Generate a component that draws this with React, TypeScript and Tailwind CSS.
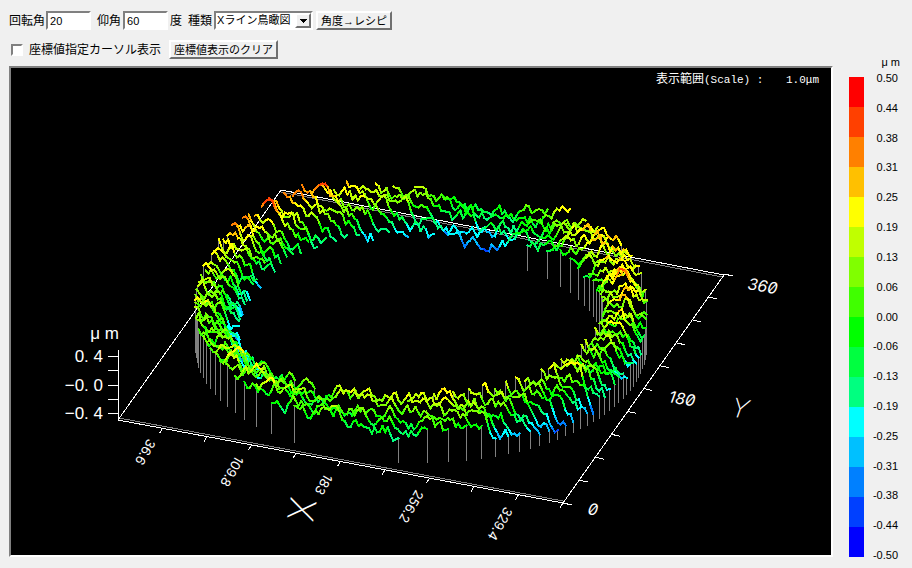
import { useMemo, useState } from 'react'

type Point = [number, number]

const SCALE_COLORS = [
  '#ff0000', '#ff4000', '#ff8000', '#ffc000', '#ffff00', '#c0ff00', '#80ff00', '#40ff00',
  '#00ff00', '#00ff40', '#00ff80', '#00ffff', '#00c0ff', '#0080ff', '#0040ff', '#0000ff',
]

const SCALE_LABELS = [
  '0.50', '0.44', '0.38', '0.31', '0.25', '0.19', '0.13', '0.06', '0.00',
  '-0.06', '-0.13', '-0.19', '-0.25', '-0.31', '-0.38', '-0.44', '-0.50',
]

const X_LABELS = [
  { text: '36.6', x: 148, y: 438 },
  { text: '109.8', x: 236, y: 455 },
  { text: '183', x: 325, y: 473 },
  { text: '256.2', x: 416, y: 489 },
  { text: '329.4', x: 505, y: 506 },
]

const Y_LABELS = [
  { text: '0', x: 587, y: 514 },
  { text: '180', x: 668, y: 402 },
  { text: '360', x: 747, y: 289 },
]

// Height at the inner edge, middle and outer edge of the ring, every 30 degrees
const PROFILE = [
  [0.1, 0.08, -0.14],
  [0.0, 0.3, 0.08],
  [-0.04, 0.1, 0.22],
  [-0.34, -0.2, -0.08],
  [-0.16, 0.04, 0.18],
  [-0.16, 0.12, 0.38],
  [-0.16, 0.08, 0.17],
  [-0.32, 0.04, 0.06],
  [-0.08, 0.12, 0.04],
  [0.08, 0.04, -0.06],
  [0.18, 0.08, -0.12],
  [0.1, 0.0, -0.32],
]

const ROWS = 54
const R_IN = 0.77
const R_OUT = 0.955
const STEP = 0.006
const Z_BASE = 35
const Z_UNIT = 71

// Plane coordinates (0..1) to drawing coordinates
function project(u: number, v: number, lift = 0): Point {
  return [118 + u * 445 + v * 161, 420 + u * 83 - v * 229 - lift]
}

function createRandom(seed: number) {
  let s = seed
  return () => {
    s = (s * 1664525 + 1013904223) % 4294967296
    return s / 4294967296
  }
}

function heightAt(u: number, v: number) {
  const x = 2 * u - 1
  const y = 2 * v - 1
  const r = Math.min(1, Math.max(0, (Math.hypot(x, y) - R_IN) / (R_OUT - R_IN)))
  const a = ((Math.atan2(y, x) / Math.PI) * 6 + 12) % 12
  const i = Math.floor(a) % 12
  const f = a - Math.floor(a)
  const p = PROFILE[i].map((h, k) => h + (PROFILE[(i + 1) % 12][k] - h) * f)
  return r < 0.5 ? p[0] + (p[1] - p[0]) * r * 2 : p[1] + (p[2] - p[1]) * (r * 2 - 1)
}

function colorOf(h: number) {
  const i = Math.floor((0.5 - h) * 16)
  return SCALE_COLORS[Math.min(15, Math.max(0, i))]
}

interface Strand {
  points: Point[]
  heights: number[]
  curtain: string
  drops: [Point, Point][]
}

function makeStrand(from: number, to: number, v: number, random: () => number): Strand {
  const count = Math.max(3, Math.round((to - from) / STEP))
  const points: Point[] = []
  const heights: number[] = []
  let noise = 0
  for (let i = 0; i <= count; i++) {
    const u = from + ((to - from) * i) / count
    noise = noise * 0.74 + (random() - 0.5) * 0.17
    const h = heightAt(u, v) + noise
    heights.push(h)
    points.push(project(u, v, Z_BASE + h * Z_UNIT))
  }
  const start = project(from, v)
  const end = project(to, v)
  const curtain = [start, ...points, end].map((p) => p.join(',')).join(' ')
  const drops: [Point, Point][] = []
  // The far left part of the ring stands free of drop lines
  if (v < 0.6 || from > 0.5) drops.push([points[0], start])
  if (v < 0.2 || from > 0.5) drops.push([points[count], end])
  return { points, heights, curtain, drops }
}

function makeStrands() {
  const random = createRandom(77)
  const strands: Strand[] = []
  for (let row = ROWS; row >= 0; row--) {
    const v = row / ROWS
    const y = Math.abs(2 * v - 1)
    if (y >= R_OUT) continue
    const outer = Math.sqrt(R_OUT * R_OUT - y * y) / 2
    if (y >= R_IN) {
      strands.push(makeStrand(0.5 - outer, 0.5 + outer, v, random))
      continue
    }
    const inner = Math.sqrt(R_IN * R_IN - y * y) / 2
    strands.push(makeStrand(0.5 - outer, 0.5 - inner, v, random))
    strands.push(makeStrand(0.5 + inner, 0.5 + outer, v, random))
  }
  return strands
}

function StrandLine({ strand }: { strand: Strand }) {
  return (
    <>
      {strand.points.slice(1).map((p, i) => (
        <line
          key={i}
          x1={strand.points[i][0]}
          y1={strand.points[i][1]}
          x2={p[0]}
          y2={p[1]}
          stroke={colorOf((strand.heights[i] + strand.heights[i + 1]) / 2)}
        />
      ))}
    </>
  )
}

function Frame() {
  const tenths = [0, 1, 2, 3, 4, 5, 6, 7, 8, 9, 10]
  return (
    <g strokeWidth="1" fill="none">
      <path d="M119 418L563 501M281 192L722 277" stroke="#808080" />
      <path d="M118 420L563 503L724 275L281 190Z" stroke="#fff" />
      {tenths.slice(1).map((n) => {
        const [x, y] = project(n / 10, 0)
        return <path key={n} d={`M${x} ${y}l-3 5`} stroke="#fff" />
      })}
      {tenths.map((n) => {
        const [x, y] = project(1, n / 10)
        return <path key={n} d={`M${x} ${y}l9 2`} stroke="#fff" />
      })}
      <path d="M118.5 350V420M108 356.5h10M108 370.5h10M108 385.5h10M108 399.5h10M108 413.5h10" stroke="#fff" />
    </g>
  )
}

function BirdsEyeView() {
  const strands = useMemo(makeStrands, [])

  return (
    <svg viewBox="11 68 820 487" className="block w-full bg-black" role="img" aria-label="Xライン鳥瞰図">
      <g shapeRendering="crispEdges">
        {strands.map((strand, i) => (
          <g key={i}>
            <polygon points={strand.curtain} fill="#000" />
            {strand.drops.map(([a, b], k) => (
              <line key={k} x1={a[0]} y1={a[1]} x2={b[0]} y2={b[1]} stroke="#808080" />
            ))}
          </g>
        ))}
        <Frame />
        <g strokeWidth="2" strokeLinecap="square">
          {strands.map((strand, i) => (
            <StrandLine key={i} strand={strand} />
          ))}
        </g>
      </g>
      <g fill="#fff">
        <g className="font-['Liberation_Mono','Noto_Sans_CJK_JP',monospace]">
          <text x="656" y="83" className="text-[12px]">
            表示範囲<tspan className="text-[11px]">(Scale) :</tspan>
          </text>
          <text x="819" y="83" textAnchor="end" className="text-[11px]">1.0μm</text>
        </g>
        <g className="font-['Liberation_Sans',sans-serif] text-[17px]" textAnchor="end">
          <text x="119" y="339">μ m</text>
          <text x="103" y="362">0. 4</text>
          <text x="103" y="391">−0. 0</text>
          <text x="103" y="419">−0. 4</text>
        </g>
        <g className="font-['Inter',sans-serif] text-[13px]">
          {X_LABELS.map(({ text, x, y }) => (
            <text key={text} transform={`translate(${x} ${y}) rotate(120)`}>{text}</text>
          ))}
        </g>
        <g className="font-['Inter',sans-serif] text-[16px] italic [font-feature-settings:'zero']">
          {Y_LABELS.map(({ text, x, y }) => (
            <text key={text} transform={`translate(${x} ${y}) rotate(10)`}>{text}</text>
          ))}
        </g>
        <g className="font-['Inter',sans-serif] text-[36px] font-extralight">
          <text transform="translate(291 496) rotate(100)">X</text>
          <text transform="translate(730 416) rotate(10)" className="text-[26px] italic">Y</text>
        </g>
      </g>
    </svg>
  )
}

function ColorScale() {
  return (
    <aside className="flex w-[79px] shrink-0 flex-col pl-4 font-['Liberation_Sans',sans-serif] text-[11px] leading-3">
      <div className="-mt-2.5 pr-3 pb-2 text-right">μ m</div>
      <div className="flex flex-1">
        <div className="mt-px flex w-[15px] flex-col">
          {SCALE_COLORS.map((color) => (
            <div key={color} className="flex-1" style={{ backgroundColor: color }} />
          ))}
        </div>
        <ul className="-mt-1 -mb-1 flex flex-1 flex-col justify-between pr-3.5 text-right">
          {SCALE_LABELS.map((label) => (
            <li key={label}>{label}</li>
          ))}
        </ul>
      </div>
    </aside>
  )
}

const sunken = 'border-2 border-t-[#808080] border-l-[#808080] border-r-white border-b-white bg-white'
const raised = 'border-2 border-t-white border-l-white border-r-[#707070] border-b-[#707070] bg-[#f0f0f0]'

export default function App() {
  const [rotation, setRotation] = useState('20')
  const [elevation, setElevation] = useState('60')
  const [showCursor, setShowCursor] = useState(false)

  return (
    <div className="flex min-h-screen flex-col bg-[#f0f0f0] px-[9px] pt-[11px] font-['Liberation_Sans','Noto_Sans_CJK_JP',sans-serif] text-[12px] leading-4 text-black">
      <div className="flex h-[19px] items-center">
        <label htmlFor="rotation" className="mr-px">回転角</label>
        <input
          id="rotation"
          value={rotation}
          onChange={(e) => setRotation(e.target.value)}
          className={`h-[19px] w-[45px] px-0.5 text-[11px] ${sunken}`}
        />
        <label htmlFor="elevation" className="mr-0.5 ml-1.5">仰角</label>
        <input
          id="elevation"
          value={elevation}
          onChange={(e) => setElevation(e.target.value)}
          className={`h-[19px] w-[45px] px-0.5 text-[11px] ${sunken}`}
        />
        <span className="ml-0.5">度</span>
        <label htmlFor="kind" className="mr-0.5 ml-1.5">種類</label>
        <div className="relative">
          <select id="kind" className={`block h-[19px] w-[99px] appearance-none pl-px text-[11px] leading-[15px] ${sunken}`}>
            <option>Xライン鳥瞰図</option>
          </select>
          <span className={`pointer-events-none absolute top-0.5 right-0.5 flex h-[15px] w-4 items-center justify-center ${raised}`}>
            <svg width="7" height="4" viewBox="0 0 7 4" shapeRendering="crispEdges">
              <path d="M0 0h7L3.5 4z" />
            </svg>
          </span>
        </div>
        <button type="button" className={`ml-[3px] h-[19px] w-[76px] text-[11px] leading-[14px] whitespace-nowrap ${raised}`}>
          角度→レシピ
        </button>
      </div>
      <div className="mt-2.5 flex h-[19px] items-center pl-0.5">
        <input
          id="cursor"
          type="checkbox"
          checked={showCursor}
          onChange={(e) => setShowCursor(e.target.checked)}
          className={`size-3 appearance-none checked:bg-black ${sunken}`}
        />
        <label htmlFor="cursor" className="ml-1.5">座標値指定カーソル表示</label>
        <button type="button" className={`ml-2 h-[19px] w-[109px] text-[11px] leading-[14px] whitespace-nowrap ${raised}`}>
          座標値表示のクリア
        </button>
      </div>
      <main className="mt-[7px] -mr-[9px] flex">
        <div className="min-w-0 flex-1 border-2 border-t-[#808080] border-r-white border-b-white border-l-[#808080]">
          <BirdsEyeView />
        </div>
        <ColorScale />
      </main>
    </div>
  )
}
